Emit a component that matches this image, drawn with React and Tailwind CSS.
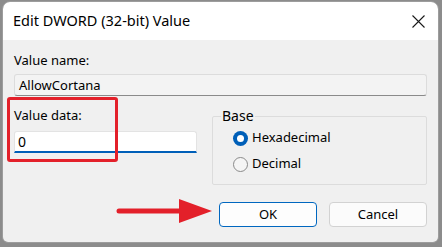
import React from "react";

const font = { fontFamily: '"Segoe UI", "Noto Sans", Arial, sans-serif' };

const Radio = ({ checked, label }) => (
  <label className="flex items-center gap-[4px] h-[20px] text-[13px] text-black">
    {checked ? (
      <span className="w-[15px] h-[15px] rounded-full bg-[#005fb8] flex items-center justify-center">
        <span className="w-[7px] h-[7px] rounded-full bg-white" />
      </span>
    ) : (
      <span className="w-[15px] h-[15px] rounded-full border border-[#8a8a8a] bg-[#f5f5f5]" />
    )}
    {label}
  </label>
);

const App = () => {
  return (
    <div className="w-[442px] h-[247px] bg-[#8c8c8c] pt-[1px] pl-[2px] pr-[3px] pb-[4px]" style={font}>
      <div className="relative h-full flex flex-col rounded-t-[8px] rounded-b-[6px] border border-[#9d9d9d] overflow-hidden">
        {/* title bar */}
        <div className="h-[38px] bg-white flex items-center justify-between pl-[10px] pr-[13px]">
          <span className="text-[14.5px] text-black">Edit DWORD (32-bit) Value</span>
          <svg width="13" height="13" viewBox="0 0 13 13">
            <path d="M0.5 0.5 L12.5 12.5 M12.5 0.5 L0.5 12.5" stroke="#1a1a1a" strokeWidth="1.1" />
          </svg>
        </div>

        {/* body */}
        <div className="flex-1 bg-[#f0f0f0] px-[11px] text-[13px] text-black">
          <div className="pt-[11px] leading-[18px]">Value name:</div>
          <div className="mt-[5px] h-[22px] bg-[#f3f3f3] border border-[#dcdcdc] border-b-[#8a8a8a] rounded-[3px] flex items-center px-[4px] leading-[18px]">
            AllowCortana
          </div>

          <div className="relative mt-[10px] flex gap-[15px]">
            <div className="w-[183px]">
              <div className="leading-[18px]">Value data:</div>
              <div className="mt-[7px] h-[22px] bg-white border border-[#e3e3e3] border-b-[2px] border-b-[#005fb8] rounded-t-[3px] flex items-center px-[3px] text-[14px]">
                0
              </div>
            </div>

            <fieldset className="flex-1 border border-[#dcdcdc] rounded-[2px] pl-[20px] pb-[6px] mt-[1px] h-[78px]">
              <legend className="ml-[-12px] px-[1px] text-[14px] leading-[18px]">Base</legend>
              <div className="flex flex-col gap-[6px] mt-[3px]">
                <Radio checked label="Hexadecimal" />
                <Radio label="Decimal" />
              </div>
            </fieldset>

            {/* red highlight box */}
            <div className="absolute left-[-7px] top-[-9px] w-[111px] h-[65px] border-[3px] border-[#e3202a] rounded-[3px]" />
          </div>

          <div className="mt-[17px] flex justify-end gap-[12px]">
            <button className="w-[98px] h-[25px] bg-[#fdfdfd] border border-[#0067c0] rounded-[4px] text-[13px]">OK</button>
            <button className="w-[98px] h-[25px] bg-[#fbfbfb] border border-[#d2d2d2] rounded-[4px] text-[13px]">Cancel</button>
          </div>
        </div>

        {/* red arrow */}
        <svg className="absolute left-[113px] top-[194px]" width="100" height="30" viewBox="0 0 100 30">
          <line x1="3" y1="15" x2="66" y2="15" stroke="#e3202a" strokeWidth="5" strokeLinecap="round" />
          <polygon points="63,3 96,15 63,27" fill="#e3202a" />
        </svg>
      </div>
    </div>
  );
};

export default App;
